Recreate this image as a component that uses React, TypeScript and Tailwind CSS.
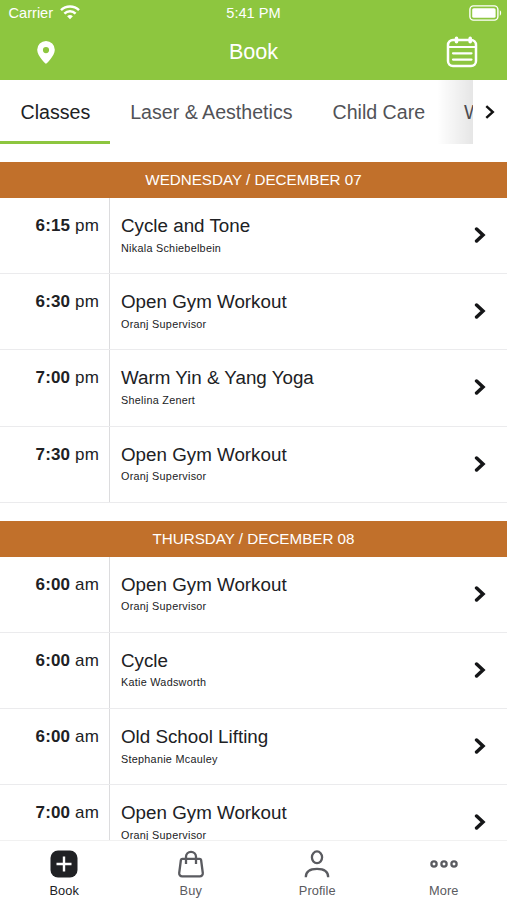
import type { ReactNode } from "react";
import clsx from "clsx";

interface ClassItem {
  time: string;
  period: string;
  name: string;
  instructor: string;
}

interface Day {
  label: string;
  classes: ClassItem[];
}

const days: Day[] = [
  {
    label: "WEDNESDAY / DECEMBER 07",
    classes: [
      { time: "6:15", period: "pm", name: "Cycle and Tone", instructor: "Nikala Schiebelbein" },
      { time: "6:30", period: "pm", name: "Open Gym Workout", instructor: "Oranj Supervisor" },
      { time: "7:00", period: "pm", name: "Warm Yin & Yang Yoga", instructor: "Shelina Zenert" },
      { time: "7:30", period: "pm", name: "Open Gym Workout", instructor: "Oranj Supervisor" },
    ],
  },
  {
    label: "THURSDAY / DECEMBER 08",
    classes: [
      { time: "6:00", period: "am", name: "Open Gym Workout", instructor: "Oranj Supervisor" },
      { time: "6:00", period: "am", name: "Cycle", instructor: "Katie Wadsworth" },
      { time: "6:00", period: "am", name: "Old School Lifting", instructor: "Stephanie Mcauley" },
      { time: "7:00", period: "am", name: "Open Gym Workout", instructor: "Oranj Supervisor" },
    ],
  },
];

function StatusBar() {
  return (
    <div className="grid h-6 grid-cols-3 items-center text-[14.6px] leading-6">
      <div className="flex items-center gap-[7px] pl-[8.5px]">
        <span className="pt-px">Carrier</span>
        <svg width="20" height="15" viewBox="0 0 20 15" fill="none" stroke="currentColor" strokeWidth="2.5">
          <path d="M1 5.1a13 13 0 0 1 18 0" />
          <path d="M4.4 8.6a8 8 0 0 1 11.2 0" />
          <path d="M10 14.3 7.1 11.3a4.2 4.2 0 0 1 5.8 0z" fill="currentColor" stroke="none" />
        </svg>
      </div>
      <div className="text-center">5:41 PM</div>
      <div className="flex justify-end pr-[5px]">
        <svg width="33" height="16" viewBox="0 0 33 16" fill="none">
          <rect x="0.9" y="0.9" width="28" height="14.2" rx="3.6" stroke="currentColor" strokeWidth="1.4" />
          <rect x="3.2" y="3.2" width="23.4" height="9.6" rx="1.6" fill="currentColor" />
          <path d="M30.8 5.3c1.8.8 1.8 4.6 0 5.4z" fill="currentColor" />
        </svg>
      </div>
    </div>
  );
}

function Header() {
  return (
    <header className="h-20 shrink-0 bg-[#8dc63f] text-white">
      <StatusBar />
      <div className="grid h-14 grid-cols-3 items-center">
        <div className="pl-[37px]">
          <svg width="18" height="23" viewBox="0 0 18 23" fill="currentColor">
            <path
              fillRule="evenodd"
              d="M9 0a8.8 8.8 0 0 0-8.8 8.8C.2 15.2 9 23 9 23s8.8-7.8 8.8-14.2A8.8 8.8 0 0 0 9 0zm0 6a3.1 3.1 0 1 1 0 6.2A3.1 3.1 0 0 1 9 6z"
            />
          </svg>
        </div>
        <h1 className="text-center text-[21.6px]">Book</h1>
        <div className="flex justify-end pr-[29px]">
          <svg width="32" height="32" viewBox="0 0 32 32" fill="none" stroke="currentColor" strokeLinecap="round">
            <rect x="2" y="4" width="28" height="26" rx="5" strokeWidth="2.5" />
            <path d="M2.5 11H29.5" strokeWidth="2.2" />
            <path d="M10.5 2.4v3.4M24.2 2.4v3.4" strokeWidth="3.6" />
            <path d="M7 17.3h18.5M7 23.6h18.5" strokeWidth="2.2" />
          </svg>
        </div>
      </div>
    </header>
  );
}

function CategoryTabs() {
  return (
    <nav className="flex h-16 shrink-0 text-[19.6px] leading-[61px] text-[#515257]">
      <div className="relative flex min-w-0 flex-1 overflow-hidden whitespace-nowrap">
        <div className="border-b-[3px] border-[#8dc63f] pr-5 pl-[20.5px] pt-0.5 text-[#202124]">Classes</div>
        <div className="px-5 pt-0.5">Laser &amp; Aesthetics</div>
        <div className="px-5 pt-0.5">Child Care</div>
        <div className="pt-0.5 pl-[19px]">W</div>
        <div className="absolute inset-y-0 right-0 w-9 bg-linear-to-r from-black/0 to-black/10" />
      </div>
      <button className="flex w-[34px] items-center justify-center text-[#111]">
        <svg width="10" height="14" viewBox="0 0 10 14" fill="none" stroke="currentColor" strokeWidth="2.4">
          <path d="M1.3 1.1 7.8 7 1.3 12.9" />
        </svg>
      </button>
    </nav>
  );
}

function ClassRow({ time, period, name, instructor }: ClassItem) {
  return (
    <li className="flex h-[76.2px] border-b border-[#ebebed]">
      <div className="w-[110px] shrink-0 border-r border-[#dcdcde] pt-4 pr-2.5 text-right text-[17px] leading-6 tracking-[0.15px] text-[#202124]">
        <span className="font-bold">{time}</span> {period}
      </div>
      <div className="min-w-0 flex-1 pt-4 pl-[11px] text-[#202124]">
        <div className="text-[18.8px] leading-6">{name}</div>
        <div className="mt-[1.5px] text-[10.8px] leading-4 tracking-[0.28px]">{instructor}</div>
      </div>
      <div className="flex w-[33px] items-center">
        <svg
          className="-mt-px"
          width="12"
          height="16"
          viewBox="0 0 12 16"
          fill="none"
          stroke="#151618"
          strokeWidth="3.5"
          strokeLinecap="round"
        >
          <path d="M2.6 2 9 8 2.6 14" />
        </svg>
      </div>
    </li>
  );
}

function DaySection({ label, classes }: Day) {
  return (
    <section className="mb-[18px]">
      <h2 className="h-9 bg-[#c1702b] text-center text-[15.2px] leading-9 text-white">{label}</h2>
      <ul>
        {classes.map((item, i) => (
          <ClassRow key={i} {...item} />
        ))}
      </ul>
    </section>
  );
}

interface TabItemProps {
  label: string;
  active?: boolean;
  children: ReactNode;
}

function TabItem({ label, active, children }: TabItemProps) {
  return (
    <button className={clsx("flex flex-1 flex-col items-center pt-2", active ? "text-[#202124]" : "text-[#5a5b60]")}>
      <svg width="30" height="30" viewBox="0 0 30 30" fill="none" stroke="currentColor" strokeWidth="2.3">
        {children}
      </svg>
      <span className="mt-1 text-[12.8px] leading-4 tracking-[0.1px]">{label}</span>
    </button>
  );
}

function TabBar() {
  return (
    <footer className="flex h-[60px] shrink-0 border-t border-[#f1f1f1] bg-white pl-px">
      <TabItem label="Book" active>
        <rect x="1.5" y="1.5" width="27" height="27" rx="7.5" fill="currentColor" stroke="none" />
        <path d="M15 7.5v15M7.5 15h15" stroke="white" strokeWidth="2.4" />
      </TabItem>
      <TabItem label="Buy">
        <path d="M6.4 9.8h17.2a1.5 1.5 0 0 1 1.5 1.2l1.7 13a3 3 0 0 1-3 3.4H6.2a3 3 0 0 1-3-3.4l1.7-13a1.5 1.5 0 0 1 1.5-1.2z" />
        <path d="M10 15V7.8a5 5 0 0 1 10 0V15" />
      </TabItem>
      <TabItem label="Profile">
        <ellipse cx="15" cy="8.3" rx="5.1" ry="5.9" />
        <path d="M3.8 28.2c0-5.6 4.4-8.4 11.2-8.4s11.2 2.8 11.2 8.4" />
      </TabItem>
      <TabItem label="More">
        <circle cx="5" cy="15" r="2.6" />
        <circle cx="15" cy="15" r="2.6" />
        <circle cx="25" cy="15" r="2.6" />
      </TabItem>
    </footer>
  );
}

export default function App() {
  return (
    <div className="flex h-[900px] w-[507px] flex-col overflow-hidden bg-white font-['Liberation_Sans',Arial,sans-serif]">
      <Header />
      <CategoryTabs />
      <main className="min-h-0 flex-1 overflow-hidden pt-[18px]">
        {days.map((day) => (
          <DaySection key={day.label} {...day} />
        ))}
      </main>
      <TabBar />
    </div>
  );
}
